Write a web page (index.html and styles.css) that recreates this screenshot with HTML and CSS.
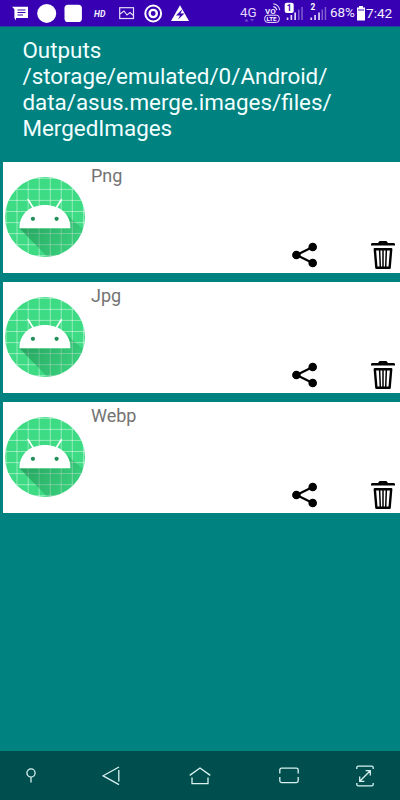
FILE: index.html
```html
<!DOCTYPE html>
<html lang="en">
<head>
<meta charset="utf-8">
<title>Outputs</title>
<link rel="stylesheet" href="styles.css">
</head>
<body>
<svg width="0" height="0" class="defs" aria-hidden="true">
  <defs>
    <clipPath id="disc"><circle cx="40" cy="40" r="40"/></clipPath>
    <linearGradient id="shade" x1="15" y1="45" x2="55" y2="80" gradientUnits="userSpaceOnUse">
      <stop offset="0" stop-color="#167c46" stop-opacity=".62"/>
      <stop offset="1" stop-color="#167c46" stop-opacity=".16"/>
    </linearGradient>
    <symbol id="robot" viewBox="0 0 80 80">
      <g clip-path="url(#disc)">
        <rect width="80" height="80" fill="#3ddc84"/>
        <path d="M1 0V80M12 0V80M23.2 0V80M34.2 0V80M45.3 0V80M56.2 0V80M67.3 0V80M78.4 0V80M0 1.3H80M0 12.4H80M0 23.4H80M0 34.5H80M0 45.6H80M0 56.6H80M0 67.7H80M0 78.7H80" stroke="#fff" stroke-opacity=".5" stroke-width=".9"/>
        <path d="M14.4 51.2H65.4V46.5L61 37L100 72V100H62Z" fill="url(#shade)"/>
      </g>
      <path d="M23.2 22.8L28.3 31M56.3 22.8L51.2 31" stroke="#fff" stroke-width="1.7" stroke-linecap="round"/>
      <path d="M14.4 51.2C14.4 37 25 28 39.9 28S65.4 37 65.4 51.2Z" fill="#fff"/>
      <circle cx="27.9" cy="41.8" r="2.1" fill="#20905a"/><circle cx="51.6" cy="41.8" r="2.1" fill="#20905a"/>
    </symbol>
    <symbol id="share" viewBox="0 0 26 26">
      <path d="M20.7 5L4.5 13L20.7 21" fill="none" stroke="#000" stroke-width="2.2"/>
      <circle cx="20.7" cy="5" r="4.3"/><circle cx="4.4" cy="13" r="4.3"/><circle cx="20.7" cy="21" r="4.3"/>
    </symbol>
    <symbol id="trash" viewBox="0 0 24 29">
      <path d="M0 3.4Q0 2 1.4 2H7L8.6 0H15.4L17 2H22.6Q24 2 24 3.4V4.4H0Z"/>
      <path d="M3.8 8.2H20.2L18.6 26.8H5.4Z" fill="none" stroke="#000" stroke-width="2.4" stroke-linejoin="round"/>
      <path d="M8.6 8L9.3 26M12 8V26M15.4 8L14.7 26" stroke="#000" stroke-width="1.5"/>
    </symbol>
  </defs>
</svg>

<header class="status">
  <svg class="notices" width="190" height="26" viewBox="0 0 190 26">
    <path d="M12 6.8H28V18H16V20.5L14.4 18V9.2Z" fill="#fff"/>
    <path d="M17.5 10H25.5M17.5 12.5H25.5M17.5 15H23" stroke="#3700b3" stroke-width="1.2"/>
    <circle cx="46.7" cy="13.4" r="9.5" fill="#fff"/>
    <rect x="64.5" y="4.7" width="17.4" height="17.4" rx="3.6" fill="#fff"/>
    <text x="94" y="16.6" class="hd">HD</text>
    <g fill="none" stroke="#e4dcf8" stroke-width="1.2">
      <rect x="119.7" y="7.7" width="13.8" height="10.8"/>
      <path d="M120 14L124 11L127 15L130 12.5L133.5 15.5"/>
    </g>
    <circle cx="153.2" cy="13.5" r="7.9" fill="none" stroke="#fff" stroke-width="2"/>
    <circle cx="153.2" cy="13.5" r="3.6" fill="none" stroke="#fff" stroke-width="2.4"/>
    <path d="M180 5.2L189 21H171Z" fill="#fff"/>
    <path d="M182.5 9L176 15.6H180L178 19.5L184.5 13.5H180.5Z" fill="#3700b3"/>
  </svg>
  <div class="system">
    <svg width="88" height="26" viewBox="240 0 88 26">
      <text x="240" y="17.2" class="net">4G</text>
      <path d="M244.5 21.5L246.5 18.8L248.5 21.5ZM250 18.9H254L252 21.5Z" fill="#6e50c8"/>
      <text x="265" y="13.9" class="vo">VO</text>
      <path d="M273.3 6.6Q276.3 7 276.8 10.2M273.3 3.8Q278.8 4.6 279.8 10.2" fill="none" stroke="#e8e0ff" stroke-width="1.1"/>
      <rect x="264.7" y="15.2" width="14.6" height="7.2" rx="3" fill="none" stroke="#eee8ff" stroke-width="1"/>
      <text x="266.5" y="21.1" class="lte">LTE</text>
      <rect x="284.7" y="2.7" width="9" height="10.3" rx="2" fill="#fff"/>
      <text x="286.8" y="11" class="sim dark">1</text>
      <text x="310.6" y="10" class="sim">2</text>
      <g fill="#ded4f8">
        <path d="M286.7 17.5H288.4V20H286.7ZM290.5 15H292.2V20H290.5ZM294.3 12.5H296V20H294.3Z"/>
        <path d="M310.4 17.5H312.1V20H310.4ZM314.2 15H315.9V20H314.2ZM318.2 12.5H319.9V20H318.2Z"/>
      </g>
      <path d="M298 9.5H299.5V20H298ZM301.3 7H302.8V20H301.3ZM321.5 9.5H323V20H321.5ZM324.7 7H326.2V20H324.7Z" fill="#7e5fd0"/>
    </svg>
    <span class="pct">68%</span>
    <svg class="battery" width="8" height="15" viewBox="0 0 8 15"><path d="M2 0H6V1.6H8V14.5H0V1.6H2Z" fill="#fff"/><path d="M1 3H7V5H1Z" fill="#9f86de"/></svg>
    <span class="clock">7:42</span>
  </div>
</header>

<main class="page">
  <h1 class="path">Outputs<br>/storage/emulated/0/Android/<br>data/asus.merge.images/files/<br>MergedImages</h1>
  <section class="list">
    <article class="card">
      <svg class="thumb"><use href="#robot"/></svg>
      <h2 class="name">Png</h2>
      <div class="actions"><svg class="share"><use href="#share"/></svg><svg class="trash"><use href="#trash"/></svg></div>
    </article>
    <article class="card">
      <svg class="thumb"><use href="#robot"/></svg>
      <h2 class="name">Jpg</h2>
      <div class="actions"><svg class="share"><use href="#share"/></svg><svg class="trash"><use href="#trash"/></svg></div>
    </article>
    <article class="card">
      <svg class="thumb"><use href="#robot"/></svg>
      <h2 class="name">Webp</h2>
      <div class="actions"><svg class="share"><use href="#share"/></svg><svg class="trash"><use href="#trash"/></svg></div>
    </article>
  </section>
</main>

<nav class="navbar">
  <svg width="10" height="16" viewBox="0 0 10 16"><circle cx="5" cy="5" r="4.1"/><path d="M5 9.2V14.5"/></svg>
  <svg width="18" height="20" viewBox="0 0 18 20"><path d="M17 1L1.2 9.8L17 18.6M16.8 4V15.6"/></svg>
  <svg width="22" height="18" viewBox="0 0 22 18"><path d="M.7 8.4L11 1L21.3 8.4M3 10.5V16.6H19V10.5"/></svg>
  <svg width="20" height="17" viewBox="0 0 20 17"><path d="M.8 6.5V3Q.8 1.2 2.6 1.2H17.4Q19.2 1.2 19.2 3V6.5M.8 10V13.8Q.8 15.6 2.6 15.6H17.4Q19.2 15.6 19.2 13.8V10"/></svg>
  <svg width="18" height="22" viewBox="0 0 18 22"><path d="M.8 4V2.6Q.8 1.2 2.4 1.2H15.6Q17.2 1.2 17.2 2.6V4M.8 18V19.4Q.8 20.8 2.4 20.8H15.6Q17.2 20.8 17.2 19.4V18M3.8 16.3L14.2 5.7M9.6 5.6H14.3V10.4M3.7 11.6V16.4H8.4"/></svg>
</nav>
</body>
</html>
```
FILE: styles.css
```css
* { box-sizing: border-box; }

body {
  margin: 0;
  width: 400px;
  height: 800px;
  display: flex;
  flex-direction: column;
  overflow: hidden;
  background: #008281;
  font-family: Roboto, "Liberation Sans", sans-serif;
}

.defs { position: absolute; }
svg { display: block; flex: none; }

.status {
  height: 27px;
  flex: none;
  display: flex;
  justify-content: space-between;
  background: #3700b3;
  border-bottom: 1px solid #1c45a0;
  color: #f3efff;
}

.system {
  width: 160px;
  height: 26px;
  display: flex;
  align-items: center;
}

.pct, .clock {
  font-size: 13.4px;
  line-height: 28px;
  white-space: nowrap;
}
.pct { width: 26px; margin-left: 2px; }
.battery { margin: 0 1px; }
.clock { font-size: 13.6px; }

.hd { font: italic 700 8.6px Roboto, sans-serif; fill: #f3efff; }
.net { font-size: 13.4px; fill: #e0d6fa; }
.vo { font-size: 8px; font-weight: 700; fill: #f3efff; }
.lte { font-size: 6.2px; font-weight: 700; fill: #fff; }
.sim { font-size: 8.4px; font-weight: 700; fill: #fff; }
.sim.dark { fill: #3700b3; }

.page { flex: 1; }

.path {
  margin: 0;
  padding: 9.5px 22px 0 22.4px;
  height: 134.5px;
  font-size: 22.4px;
  font-weight: 400;
  line-height: 26px;
  color: #f2ffff;
}

.list {
  display: flex;
  flex-direction: column;
  gap: 8.5px;
  padding-left: 3px;
}

.card {
  height: 111.5px;
  display: grid;
  grid-template-columns: 88px 1fr auto;
  background: #fff;
}

.thumb {
  width: 80px;
  height: 80px;
  margin: 15.5px 0 0 1.6px;
}

.name {
  margin: 3.5px 0 0;
  font-size: 18px;
  font-weight: 400;
  line-height: 22px;
  color: #737373;
}

.actions {
  display: flex;
  align-items: flex-end;
  gap: 52.6px;
  padding-right: 5.4px;
}
.share { width: 26px; height: 26px; margin-bottom: 5px; }
.trash { width: 24px; height: 29px; margin-bottom: 3px; }

.navbar {
  height: 49px;
  flex: none;
  display: grid;
  grid-template-columns: 62px 98px 80px 98px 53px;
  align-items: center;
  justify-items: center;
  background: #004f4e;
  fill: none;
  stroke: #d9f2f1;
  stroke-width: 1.3;
}
```
